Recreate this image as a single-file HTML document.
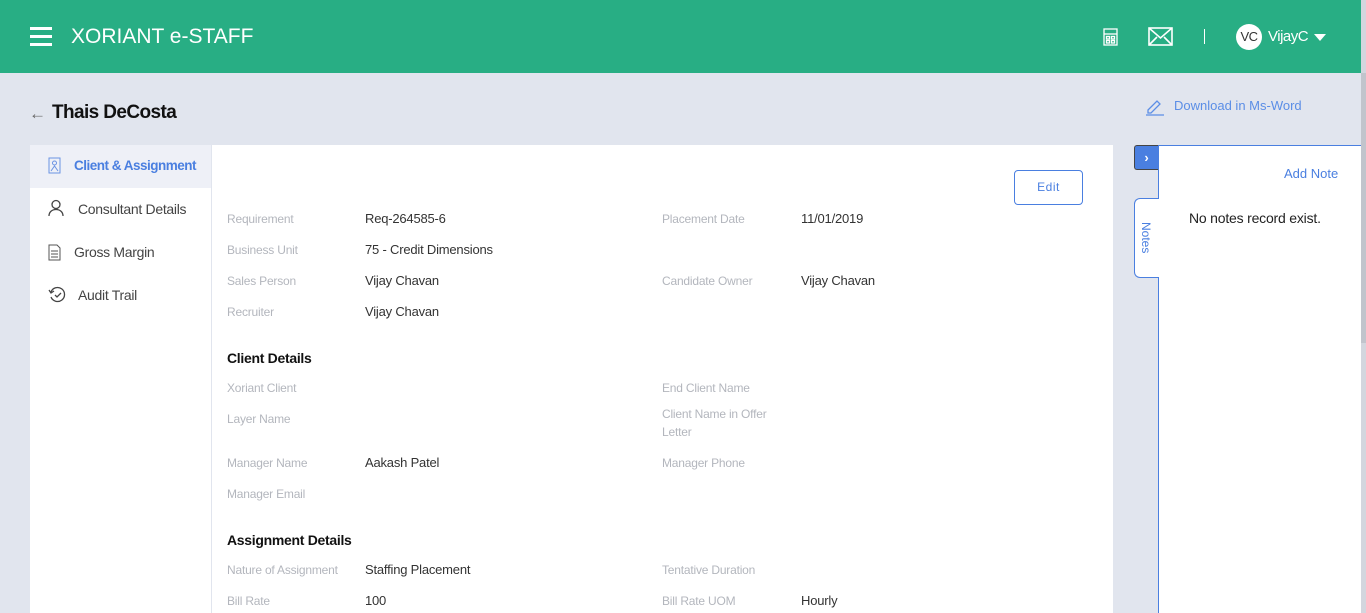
<!DOCTYPE html>
<html><head><style>
*{margin:0;padding:0;box-sizing:border-box}
body{width:1366px;height:613px;overflow:hidden;background:#e1e5ee;font-family:"Liberation Sans",sans-serif;position:relative}
.hdr{position:absolute;left:0;top:0;width:1361px;height:73px;background:#28ae84}
.sb{position:absolute;right:0;top:0;width:5px;height:613px;background:#d3d6de}
.sb i{position:absolute;left:0;top:73px;width:5px;height:270px;background:#c1c4cc}
.a{position:absolute;white-space:nowrap}
.lab{position:absolute;font-size:12px;color:#b3b6bd;letter-spacing:-0.2px}
.val{position:absolute;font-size:13px;color:#333;letter-spacing:-0.2px}
.sec{position:absolute;font-size:14px;font-weight:bold;color:#111;letter-spacing:-0.3px}
.nav{position:absolute;left:30px;width:181px;height:43px;font-size:14px;color:#444;letter-spacing:-0.3px}
</style></head><body>
<div class="hdr">
 <div class="a" style="left:30px;top:27px;width:22px;height:3px;background:#fff"></div>
 <div class="a" style="left:30px;top:35px;width:22px;height:3px;background:#fff"></div>
 <div class="a" style="left:30px;top:43px;width:22px;height:3px;background:#fff"></div>
 <div class="a" style="left:71px;top:25px;font-size:21px;color:#fff">XORIANT e-STAFF</div>
 <svg class="a" style="left:1103px;top:28px" width="15" height="18" viewBox="0 0 15 18" fill="none" stroke="#fff" stroke-width="1.3"><rect x="1" y="1" width="13" height="16"/><line x1="1" y1="6" x2="14" y2="6"/><rect x="3.5" y="8.5" width="3" height="2.5"/><rect x="8.5" y="8.5" width="3" height="2.5"/><rect x="3.5" y="12.5" width="3" height="2.5"/><rect x="8.5" y="12.5" width="3" height="2.5"/></svg>
 <svg class="a" style="left:1148px;top:27px" width="25" height="19" viewBox="0 0 25 19" fill="none" stroke="#fff" stroke-width="1.6"><rect x="1" y="1" width="23" height="17"/><path d="M1 1l11.5 10L24 1M1 18l8-8M24 18l-8-8"/></svg>
 <div class="a" style="left:1204px;top:29px;width:1px;height:15px;background:#fff"></div>
 <div class="a" style="left:1236px;top:24px;width:26px;height:26px;border-radius:50%;background:#fff;color:#333;font-size:13px;text-align:center;line-height:26px;letter-spacing:-0.5px">VC</div>
 <div class="a" style="left:1268px;top:28px;font-size:15px;color:#fff;letter-spacing:-0.5px">VijayC</div>
 <div class="a" style="left:1314px;top:34px;border-left:6px solid transparent;border-right:6px solid transparent;border-top:7px solid #fff"></div>
</div>
<div class="sb"><i></i></div>
<div class="a" style="left:29px;top:104px;font-size:17px;color:#666">←</div>
<div class="a" style="left:52px;top:102px;font-size:19px;font-weight:bold;color:#111;letter-spacing:-0.6px">Thais DeCosta</div>
<svg class="a" style="left:1145px;top:97px" width="20" height="19" viewBox="0 0 20 19" fill="none" stroke="#5b8ee6" stroke-width="1.3"><path d="M3 13l9-9 3 3-9 9H3z"/><line x1="1" y1="18" x2="19" y2="18"/></svg>
<div class="a" style="left:1174px;top:98px;font-size:13px;color:#5b8ee6">Download in Ms-Word</div>
<div class="a" style="left:30px;top:145px;width:181px;height:468px;background:#fff"></div>
<div class="nav" style="top:145px;background:#eef0f7;color:#4a7fe0;font-weight:bold;font-size:13.5px;letter-spacing:-0.5px"><svg class="a" style="left:18px;top:12px" width="13" height="17" viewBox="0 0 13 17" fill="none" stroke="#6b93e3" stroke-width="1"><rect x="1" y="1" width="11" height="15"/><circle cx="6.5" cy="6" r="2"/><path d="M3 14l3.5-5 3.5 5"/></svg><span class="a" style="left:44px;top:13px">Client &amp; Assignment</span></div>
<div class="nav" style="top:187px"><svg class="a" style="left:18px;top:12px" width="16" height="18" viewBox="0 0 16 18" fill="none" stroke="#444" stroke-width="1.3"><circle cx="8" cy="5.5" r="4"/><path d="M1 17c0-4 3-6.5 7-6.5s7 2.5 7 6.5"/></svg><span class="a" style="left:48px;top:14px">Consultant Details</span></div>
<div class="nav" style="top:230px"><svg class="a" style="left:18px;top:14px" width="13" height="17" viewBox="0 0 13 17" fill="none" stroke="#555" stroke-width="1"><path d="M1 1h8l3 3v12H1z"/><path d="M3 7h7M3 10h7M3 13h7"/></svg><span class="a" style="left:44px;top:14px">Gross Margin</span></div>
<div class="nav" style="top:273px"><svg class="a" style="left:18px;top:13px" width="18" height="17" viewBox="0 0 18 17" fill="none" stroke="#444" stroke-width="1.3"><path d="M3 6a7 7 0 1 1 0 5"/><path d="M1 4l2 3 3-2"/><path d="M7 9l2 2 4-4"/></svg><span class="a" style="left:48px;top:14px">Audit Trail</span></div>
<div class="a" style="left:212px;top:145px;width:901px;height:468px;background:#fff"></div>
<div class="a" style="left:1014px;top:170px;width:69px;height:35px;border:1px solid #4a7fe0;border-radius:4px;color:#4a7fe0;font-size:12px;text-align:center;line-height:33px;letter-spacing:.5px">Edit</div>
<div class="lab" style="left:227px;top:212px">Requirement</div><div class="val" style="left:365px;top:211px">Req-264585-6</div>
<div class="lab" style="left:662px;top:212px">Placement Date</div><div class="val" style="left:801px;top:211px">11/01/2019</div>
<div class="lab" style="left:227px;top:243px">Business Unit</div><div class="val" style="left:365px;top:242px">75 - Credit Dimensions</div>
<div class="lab" style="left:227px;top:274px">Sales Person</div><div class="val" style="left:365px;top:273px">Vijay Chavan</div>
<div class="lab" style="left:662px;top:274px">Candidate Owner</div><div class="val" style="left:801px;top:273px">Vijay Chavan</div>
<div class="lab" style="left:227px;top:305px">Recruiter</div><div class="val" style="left:365px;top:304px">Vijay Chavan</div>
<div class="sec" style="left:227px;top:350px">Client Details</div>
<div class="lab" style="left:227px;top:381px">Xoriant Client</div>
<div class="lab" style="left:662px;top:381px">End Client Name</div>
<div class="lab" style="left:227px;top:412px">Layer Name</div>
<div class="lab" style="left:662px;top:405px;line-height:18px">Client Name in Offer<br>Letter</div>
<div class="lab" style="left:227px;top:456px">Manager Name</div><div class="val" style="left:365px;top:455px">Aakash Patel</div>
<div class="lab" style="left:662px;top:456px">Manager Phone</div>
<div class="lab" style="left:227px;top:487px">Manager Email</div>
<div class="sec" style="left:227px;top:532px">Assignment Details</div>
<div class="lab" style="left:227px;top:563px">Nature of Assignment</div><div class="val" style="left:365px;top:562px">Staffing Placement</div>
<div class="lab" style="left:662px;top:563px">Tentative Duration</div>
<div class="lab" style="left:227px;top:594px">Bill Rate</div><div class="val" style="left:365px;top:593px">100</div>
<div class="lab" style="left:662px;top:594px">Bill Rate UOM</div><div class="val" style="left:801px;top:593px">Hourly</div>
<div class="a" style="left:1158px;top:145px;width:203px;height:468px;background:#fff;border-left:1px solid #4a7fe0;border-top:1px solid #4a7fe0"></div>
<div class="a" style="left:1134px;top:145px;width:24px;height:25px;background:#4a7fe0;border:1px solid #444;border-right:none;border-radius:3px 0 0 3px;color:#fff;font-weight:bold;font-size:13px;text-align:center;line-height:23px">›</div>
<div class="a" style="left:1134px;top:198px;width:25px;height:80px;background:#fff;border:1px solid #4a7fe0;border-right:none;border-radius:6px 0 0 6px"></div>
<div class="a" style="left:1139px;top:222px;font-size:12px;color:#4a7fe0;writing-mode:vertical-rl">Notes</div>
<div class="a" style="left:1284px;top:166px;font-size:13px;color:#4a7fe0">Add Note</div>
<div class="a" style="left:1189px;top:210px;font-size:14px;color:#222;letter-spacing:-0.2px">No notes record exist.</div>
</body></html>
